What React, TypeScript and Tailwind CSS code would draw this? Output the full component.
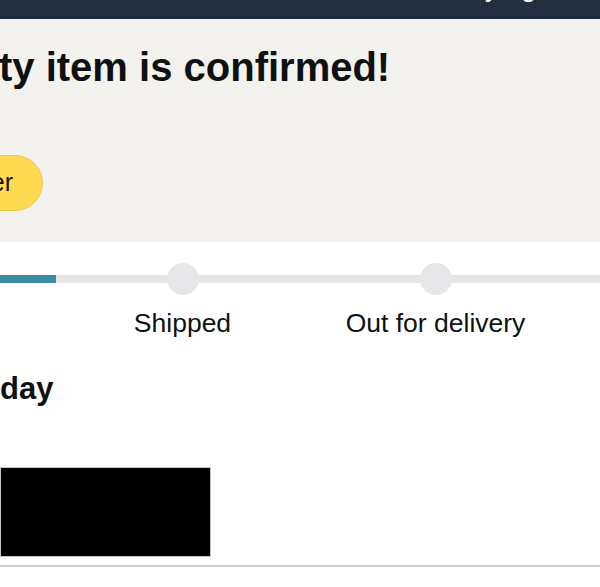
import React from "react";

const font = { fontFamily: '"Liberation Sans", Arial, sans-serif' };

function Step({ label, leftColor, rightColor, dotColor }: { label: string; leftColor: string; rightColor: string; dotColor: string }) {
  return (
    <div className="flex w-[253px] shrink-0 flex-col items-center">
      <div className="flex w-full items-center">
        <div className={`h-[8px] flex-1 ${leftColor}`} />
        <div className={`h-[32px] w-[32px] shrink-0 rounded-full ${dotColor}`} />
        <div className={`h-[8px] flex-1 ${rightColor}`} />
      </div>
      <div className="mt-[13px] whitespace-nowrap text-[26.5px] leading-[30px] text-[#0f1111]">{label}</div>
    </div>
  );
}

export default function App() {
  return (
    <div className="h-[587px] w-[600px] overflow-hidden bg-white" style={font}>
      <div className="flex h-[19px] justify-end overflow-hidden border-b-2 border-[#1a2938] bg-[#232f3e] pr-[28px]">
        <span className="mt-[-26px] whitespace-nowrap text-[27px] leading-[26px] text-white">Buy again</span>
      </div>
      <div className="flex h-[223px] flex-col items-start bg-[#f3f2ef] pt-[24px]">
        <h1 className="ml-[-1px] whitespace-nowrap text-[40px] font-bold leading-[48px] text-[#0f1111]">ty item is confirmed!</h1>
        <button className="ml-[-120px] mt-[64px] flex h-[56px] w-[163px] items-center justify-end overflow-hidden whitespace-nowrap rounded-full border border-[#f2c744] bg-[#fdda50] pr-[29px] text-[25px] text-[#0f1111]">
          View order
        </button>
      </div>
      <div className="pt-[21px]">
        <div className="ml-[-197px] flex">
          <Step label="Ordered" leftColor="bg-[#3a8da3]" rightColor="bg-[#3a8da3]" dotColor="bg-[#3a8da3]" />
          <Step label="Shipped" leftColor="bg-[#e7e6e7]" rightColor="bg-[#e7e6e7]" dotColor="bg-[#e7e6e8]" />
          <Step label="Out for delivery" leftColor="bg-[#e7e6e7]" rightColor="bg-[#e7e6e7]" dotColor="bg-[#e7e6e8]" />
          <Step label="Delivered" leftColor="bg-[#e7e6e7]" rightColor="bg-[#e7e6e7]" dotColor="bg-[#e7e6e8]" />
        </div>
        <h2 className="mt-[33px] whitespace-nowrap text-[31px] font-bold leading-[36px] text-[#0f1111]">day</h2>
        <div className="mt-[60px] h-[90px] w-[211px] border border-[#c4c4c4] bg-black" />
        <div className="mt-[8px] h-[2px] w-full bg-[#cccccc]" />
      </div>
    </div>
  );
}
